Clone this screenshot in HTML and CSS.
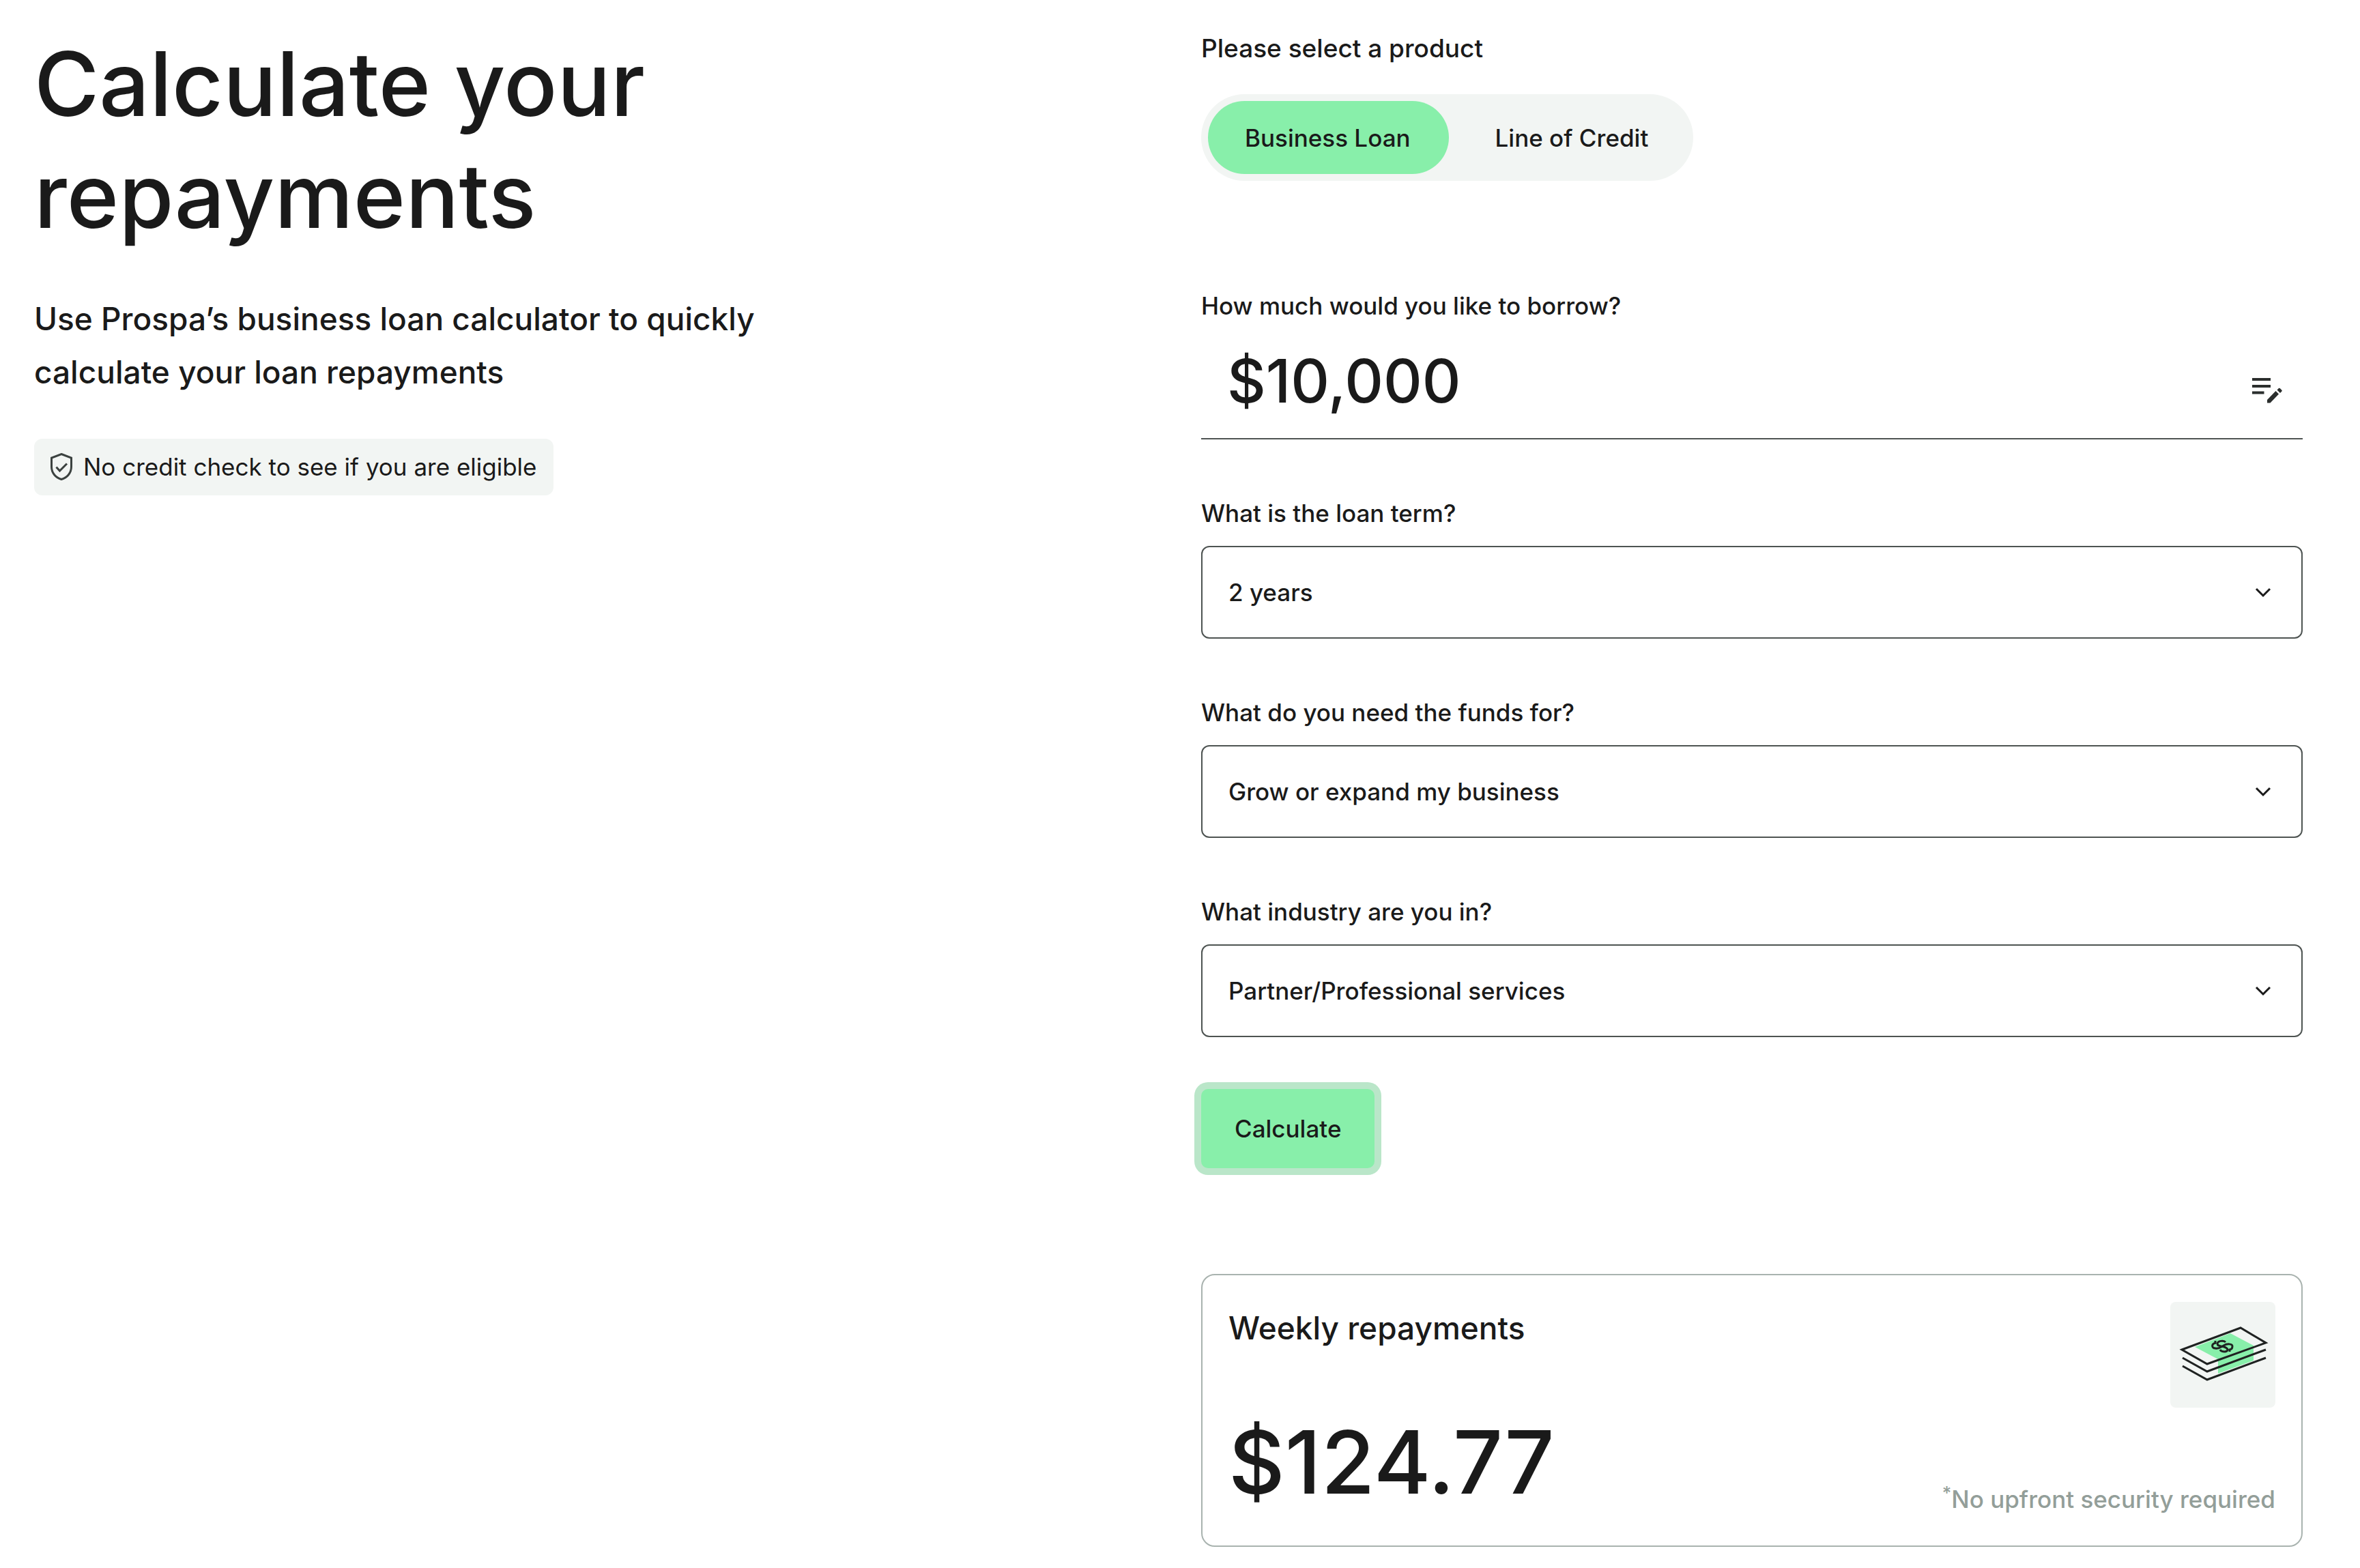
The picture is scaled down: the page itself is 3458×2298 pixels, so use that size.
FILE: index.html
```html
<!DOCTYPE html>
<html lang="en">
<head>
<meta charset="utf-8">
<meta name="viewport" content="width=device-width, initial-scale=1">
<title>Calculate your repayments</title>
<link rel="stylesheet" href="styles.css">
</head>
<body>
<main class="calculator">
  <section class="intro">
    <h1 class="intro-title">Calculate your repayments</h1>
    <p class="intro-text">Use Prospa’s business loan calculator to quickly calculate your loan repayments</p>
    <p class="badge">
      <svg class="badge-icon" viewBox="0 0 32 40" aria-hidden="true"><path d="M16 1.5 L30.5 7 V20 C30.5 29 24.500 36 16 38.500 C7.500 36 1.500 29 1.500 20 V7 Z"/><path d="M8.500 20.500 L13.500 26 L24 15.500"/></svg>
      No credit check to see if you are eligible
    </p>
  </section>

  <form class="form">
    <fieldset class="product">
      <legend class="label product-label">Please select a product</legend>
      <div class="toggle">
        <label class="toggle-option"><input class="toggle-input" type="radio" name="product" checked>Business Loan</label>
        <label class="toggle-option"><input class="toggle-input" type="radio" name="product">Line of Credit</label>
      </div>
    </fieldset>

    <div class="fields">
      <div class="field-amount">
        <label class="label" for="amount">How much would you like to borrow?</label>
        <div class="amount">
          <input class="amount-input" id="amount" type="text" inputmode="numeric" value="$10,000">
          <button class="amount-edit" type="button" aria-label="Edit amount">
            <svg class="edit-icon" viewBox="0 0 44 38" aria-hidden="true"><path d="M0 1h27v4H0zM0 11h27v4H0zM0 20.500h17.500v4H0z"/><path d="M34.500 20l4.500 4.500L26.500 37.500H22v-4.500zM36.500 18.500l2.400-2.400q1-.8 1.800 0l2.700 2.700q.7.900 0 1.700l-2.400 2.400z"/></svg>
          </button>
        </div>
      </div>
      <div class="field">
        <label class="label" for="term">What is the loan term?</label>
        <div class="select">
          <select class="select-input" id="term"><option>2 years</option></select>
          <svg class="chevron" viewBox="0 0 24 16" aria-hidden="true"><path d="M2 3l10 10L22 3"/></svg>
        </div>
      </div>
      <div class="field">
        <label class="label" for="purpose">What do you need the funds for?</label>
        <div class="select">
          <select class="select-input" id="purpose"><option>Grow or expand my business</option></select>
          <svg class="chevron" viewBox="0 0 24 16" aria-hidden="true"><path d="M2 3l10 10L22 3"/></svg>
        </div>
      </div>
      <div class="field">
        <label class="label" for="industry">What industry are you in?</label>
        <div class="select">
          <select class="select-input" id="industry"><option>Partner/Professional services</option></select>
          <svg class="chevron" viewBox="0 0 24 16" aria-hidden="true"><path d="M2 3l10 10L22 3"/></svg>
        </div>
      </div>
    </div>

    <button class="submit" type="button">Calculate</button>

    <section class="result">
      <div class="result-head">
        <h2 class="result-title">Weekly repayments</h2>
        <div class="result-tile">
          <svg class="notes-icon" viewBox="0 0 154 154" aria-hidden="true">
            <path class="notes-band" d="M36 66L88 46L122 64V86L70 105V84Z"/>
            <path class="notes-line" d="M17 70L103 38L140 60L54 91ZM18 82L54 102L140 70M18 94L54 114L140 82"/>
            <path class="notes-line" d="M81 59C78 56 70 57 69 61C69 66 75 64 79 66C85 68 86 72 80 73C77 73 74 72 73 70M67 60C60 61 60 68 66 68C72 69 74 66 78 64C83 61 91 61 91 65C91 69 89 70 86 70M66 57V61M87 69V73"/>
          </svg>
        </div>
      </div>
      <div class="result-foot">
        <output class="result-value">$124.77</output>
        <p class="result-note"><sup class="asterisk">*</sup>No upfront security required</p>
      </div>
    </section>
  </form>
</main>
</body>
</html>
```
FILE: styles.css
```css
* {
  box-sizing: border-box;
}

body {
  margin: 0;
  background: #fff;
  color: #1a1a1a;
  font-family: Inter, "Liberation Sans", sans-serif;
  font-size: 35px;
  font-weight: 500;
  line-height: 48px;
}

h1, h2, p, fieldset {
  margin: 0;
  padding: 0;
  border: 0;
  font-weight: inherit;
}

input, select, button {
  margin: 0;
  padding: 0;
  border: 0;
  background: none;
  color: inherit;
  font: inherit;
}

.calculator {
  display: grid;
  grid-template-columns: 1fr 1fr;
  gap: 96px;
  padding: 0 84px 30px 50px;
}

.intro {
  display: flex;
  flex-direction: column;
  align-items: flex-start;
  padding-top: 41px;
}

.intro-title {
  max-width: 1100px;
  font-size: 130px;
  line-height: 164px;
}

.intro-text {
  max-width: 1120px;
  margin-top: 59px;
  font-size: 46px;
  line-height: 78px;
}

.badge {
  display: flex;
  align-items: center;
  gap: 16px;
  margin-top: 59px;
  padding: 17px 24px 18px;
  border-radius: 12px;
  background: #f2f5f3;
  font-weight: 400;
}

.badge-icon {
  width: 32px;
  height: 40px;
  fill: none;
  stroke: #3c4240;
  stroke-width: 3;
}

.form {
  display: flex;
  flex-direction: column;
  align-items: flex-start;
  padding-top: 47px;
}

.label {
  display: block;
}

.product-label {
  padding: 0;
  margin-bottom: 43px;
  font-size: 37px;
}

.toggle {
  display: flex;
  gap: 14px;
  width: fit-content;
  padding: 10px;
  border-radius: 64px;
  background: #f2f5f3;
}

.toggle-option {
  display: flex;
  align-items: center;
  height: 107px;
  padding: 0 56px 0 54px;
  border-radius: 54px;
}

.toggle-option:has(:checked) {
  background: #88efaa;
}

.toggle-input {
  appearance: none;
  width: 0;
  height: 0;
}

.fields {
  display: flex;
  flex-direction: column;
  gap: 84px;
  width: 100%;
  margin-top: 159px;
}

.amount {
  display: flex;
  align-items: flex-end;
  justify-content: space-between;
  padding: 34px 30px 32px 38px;
  border-bottom: 2px solid #4e5452;
}

.amount-input {
  flex: 1;
  height: 104px;
  font-size: 88px;
  line-height: 104px;
}

.amount-edit {
  display: flex;
  align-items: center;
  height: 76px;
}

.edit-icon {
  width: 44px;
  height: 38px;
  fill: #2b2e2d;
}

.select {
  display: grid;
  margin-top: 24px;
}

.select-input,
.chevron {
  grid-area: 1 / 1;
}

.select-input {
  appearance: none;
  width: 100%;
  height: 136px;
  padding: 0 96px 0 38px;
  border: 2px solid #4e5452;
  border-radius: 12px;
}

.chevron {
  align-self: center;
  justify-self: end;
  width: 24px;
  height: 16px;
  margin-right: 46px;
  fill: none;
  stroke: #1a1a1a;
  stroke-width: 3;
  pointer-events: none;
}

.submit {
  height: 116px;
  margin-top: 76px;
  padding: 0 49px;
  border-radius: 10px;
  background: #88efaa;
  box-shadow: 0 0 0 10px #bae6c9;
}

.result {
  width: 100%;
  margin-top: 155px;
  padding: 39px 38px 42px;
  border: 2px solid #a9b3af;
  border-radius: 20px;
}

.result-head,
.result-foot {
  display: flex;
  justify-content: space-between;
}

.result-title {
  margin-top: 6px;
  font-size: 46px;
  line-height: 64px;
}

.result-tile {
  width: 154px;
  height: 155px;
  border-radius: 8px;
  background: #f2f5f3;
}

.notes-icon {
  display: block;
  width: 154px;
  height: 154px;
}

.notes-band {
  fill: #88efaa;
}

.notes-line {
  fill: none;
  stroke: #1f2221;
  stroke-width: 3;
}

.result-foot {
  align-items: flex-end;
}

.result-value {
  font-size: 128px;
  line-height: 160px;
}

.result-note {
  padding-bottom: 2px;
  color: #939e99;
}

.asterisk {
  font-size: 26px;
  line-height: 0;
}
```
